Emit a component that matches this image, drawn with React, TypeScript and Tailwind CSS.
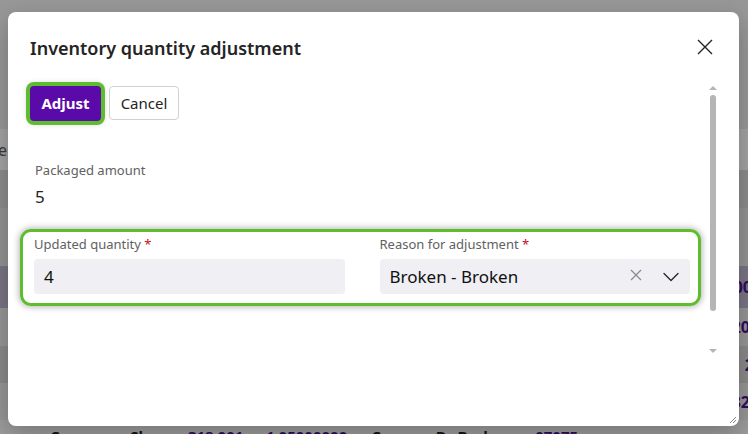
import { ChevronDown } from 'lucide-react';

const font = { fontFamily: '"Noto Sans", "Open Sans", sans-serif' };

function Backdrop() {
    return (
        <div className="flex flex-col h-full w-full bg-[#979797]">
            <div className="h-[129px] shrink-0 bg-[#989898]" />
            <div className="h-[41px] shrink-0 bg-[#a3a3a3] flex items-center text-[#3a3a3a] text-[16px] -ml-[2px]">er</div>
            <div className="h-[38px] shrink-0 bg-[#8c8c8c]" />
            <div className="h-[58px] shrink-0 bg-[#939393]" />
            <div className="h-[42px] shrink-0 bg-[#7a7484] flex items-center justify-end text-[#2f0b5e] font-bold text-[16px] -mr-[4px]">00</div>
            <div className="h-[38px] shrink-0 bg-[#969696] flex items-center justify-end text-[#2f0b5e] font-bold text-[16px] -mr-[2px]">20</div>
            <div className="h-[37px] shrink-0 bg-[#8a8a8a] flex items-center justify-end text-[#2f0b5e] font-bold text-[16px] -mr-[6px]">2</div>
            <div className="h-[37px] shrink-0 bg-[#969696] flex items-center justify-end text-[#2f0b5e] font-bold text-[16px] -mr-[2px]">32</div>
            <div className="flex-1 min-h-0 overflow-hidden bg-[#9c9c9c] flex gap-6 pl-[50px] pt-[9px] text-[15px] font-bold text-[#111] leading-none whitespace-nowrap">
                <span>Consumer Shar</span>
                <span className="text-[#2f0b5e]">318 001 — 1 05000000</span>
                <span>Consum Dr Broken</span>
                <span className="text-[#2f0b5e]">07075</span>
            </div>
        </div>
    );
}

function Label({ text, required }: { text: string; required?: boolean }) {
    return (
        <div className="text-[13px] leading-[18px] text-[#616161]">
            {text}
            {required && <span className="text-[#c50f1f]"> *</span>}
        </div>
    );
}

export default function App() {
    return (
        <div className="relative w-[748px] h-[434px] overflow-hidden" style={font}>
            <Backdrop />

            <div className="absolute left-[8px] top-[12px] w-[731px] h-[414px] bg-white rounded-[8px] shadow-[0_8px_24px_rgba(0,0,0,0.25)] flex flex-col">
                <div className="flex items-start justify-between pl-[22px] pr-[26px] pt-[22px]">
                    <h1 className="text-[18px] leading-[28px] font-semibold text-[#242424]">
                        Inventory quantity adjustment
                    </h1>
                    <svg width="16" height="16" viewBox="0 0 16 16" className="mt-[5px]">
                        <path d="M1 1 L15 15 M15 1 L1 15" stroke="#242424" strokeWidth="1.4" fill="none" />
                    </svg>
                </div>

                <div className="flex flex-1 pt-[22px] pr-[22px] pb-[54px]">
                    <div className="flex-1 flex flex-col">
                        <div className="flex gap-[8px] pl-[22px] pt-[2px]">
                            <button className="h-[35px] w-[71px] rounded-[4px] bg-[#5a0aa8] text-white text-[15px] font-bold ring-4 ring-[#5ebd2f] shadow-[0_0_6px_2px_rgba(0,0,0,0.25)]">
                                Adjust
                            </button>
                            <button className="h-[34px] w-[70px] rounded-[4px] border border-[#d1d1d1] bg-white text-[#242424] text-[15px]">
                                Cancel
                            </button>
                        </div>

                        <div className="pl-[27px] pt-[40px]">
                            <Label text="Packaged amount" />
                            <div className="text-[17px] leading-[24px] text-[#242424] mt-[6px]">5</div>
                        </div>

                        <div className="ml-[12px] mr-[8px] mt-[20px] rounded-[11px] border-[3px] border-[#5ebd2f] shadow-[0_0_6px_1px_rgba(0,0,0,0.3)] pl-[11px] pr-[8px] pt-[3px] pb-[9px] flex gap-[35px]">
                            <div className="flex-1 flex flex-col gap-[6px]">
                                <Label text="Updated quantity" required />
                                <div className="h-[35px] rounded-[4px] bg-[#efeff4] flex items-center px-[10px] text-[17px] text-[#111]">4</div>
                            </div>
                            <div className="flex-1 flex flex-col gap-[6px]">
                                <Label text="Reason for adjustment" required />
                                <div className="h-[35px] rounded-[4px] bg-[#efeff4] flex items-center pl-[10px] pr-[5px] text-[17px] text-[#111]">
                                    <span className="flex-1">Broken - Broken</span>
                                    <svg width="12" height="12" viewBox="0 0 12 12" className="-mt-[4px]">
                                        <path d="M1 1 L11 11 M11 1 L1 11" stroke="#8a8a8a" strokeWidth="1.2" fill="none" />
                                    </svg>
                                    <ChevronDown className="ml-[15px] mt-[1px]" style={{ width: 28, height: 28, strokeWidth: 1.1, color: '#242424' }} />
                                </div>
                            </div>
                        </div>
                    </div>

                    <div className="w-[8px] flex flex-col items-center pt-[2px]">
                        <div className="w-0 h-0 border-l-[4px] border-r-[4px] border-b-[4px] border-l-transparent border-r-transparent border-b-[#b5b5b5]" />
                        <div className="w-[6px] h-[216px] mt-[5px] rounded-full bg-[#b5b5b5]" />
                        <div className="mt-[38px] w-0 h-0 border-l-[4px] border-r-[4px] border-t-[4px] border-l-transparent border-r-transparent border-t-[#b5b5b5]" />
                    </div>
                </div>

                <svg width="8" height="8" viewBox="0 0 8 8" className="absolute right-[2px] bottom-[2px]">
                    <path d="M7 1 L1 7 M7 4 L4 7" stroke="#777" strokeWidth="0.9" fill="none" />
                </svg>
            </div>
        </div>
    );
}
